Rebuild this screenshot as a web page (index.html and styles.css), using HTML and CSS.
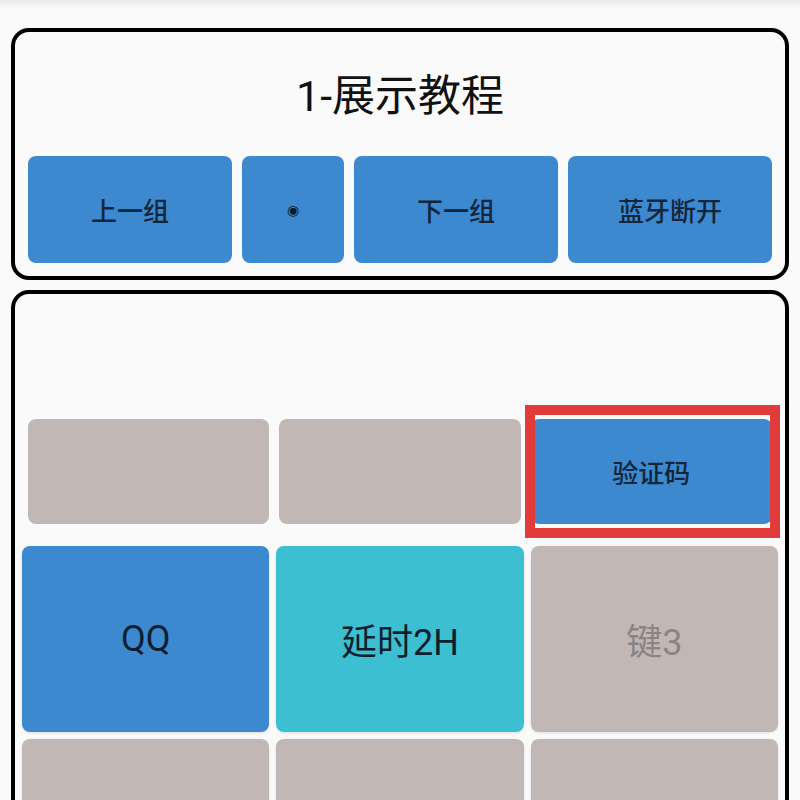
FILE: index.html
```html
<!DOCTYPE html>
<html lang="zh-CN">
<head>
  <meta charset="UTF-8">
  <title>1-展示教程</title>
  <link rel="stylesheet" href="styles.css">
</head>
<body>
  <div class="page">
    <!-- 分组控制 -->
    <div class="card group-card">
      <div class="group-title">1-展示教程</div>
      <div class="nav-row">
        <div class="btn wide">上一组</div>
        <div class="btn narrow"><span class="dot">◉</span></div>
        <div class="btn wide">下一组</div>
        <div class="btn wide">蓝牙断开</div>
      </div>
    </div>

    <!-- 按键面板 -->
    <div class="card key-card">
      <div class="key-spacer"></div>
      <div class="small-row">
        <div class="btn gray"></div>
        <div class="btn gray"></div>
        <div class="btn">验证码</div>
      </div>
      <div class="big-row">
        <div class="key blue">QQ</div>
        <div class="key teal">延时2H</div>
        <div class="key gray off">键3</div>
      </div>
      <div class="big-row">
        <div class="key gray"></div>
        <div class="key gray"></div>
        <div class="key gray"></div>
      </div>
      <div class="mark"></div>
    </div>
  </div>
</body>
</html>
```

FILE: styles.css
```css
html, body {
  margin: 0;
  padding: 0;
  background: #fafafa;
  font-family: Roboto, 'Noto Sans CJK SC', sans-serif;
  overflow: hidden;
}
body {
  height: 800px;
  background: linear-gradient(180deg, #e9e9e9 0, #fafafa 9px);
}
.page {
  padding: 28px 11px 0;
}
.card {
  border: 4px solid #000;
  border-radius: 18px;
  background: #fafafa;
  box-sizing: border-box;
}
.group-card {
  padding: 0 13px 13px;
}
.group-title {
  height: 119px;
  padding-bottom: 5px;
  display: flex;
  align-items: center;
  justify-content: center;
  font-size: 43px;
  color: #111;
}
.nav-row {
  display: flex;
  gap: 10px;
  height: 107px;
}
.btn {
  display: flex;
  align-items: center;
  justify-content: center;
  background: #3c89cf;
  border-radius: 8px;
  font-size: 26px;
  font-weight: 500;
  color: #13253a;
}
.wide { flex: 2; }
.narrow { flex: 1; }
.dot {
  font-family: 'DejaVu Sans', sans-serif;
  font-size: 14px;
  font-weight: 400;
  color: #0d1b2c;
}

.key-card {
  margin-top: 10px;
  padding: 0 7px;
  position: relative;
  height: 600px;
}
.key-spacer {
  height: 125px;
}
.small-row {
  display: grid;
  grid-template-columns: repeat(3, 1fr);
  gap: 10px;
  height: 105px;
  margin: 0 6px 22px;
}
.btn.gray {
  background: #c1b8b6;
}
.big-row {
  display: grid;
  grid-template-columns: repeat(3, 1fr);
  gap: 7px;
  height: 186px;
  margin-bottom: 7px;
}
.key {
  display: flex;
  align-items: center;
  justify-content: center;
  border-radius: 8px;
  font-size: 36px;
  color: #0f1e2e;
  box-shadow: 0 1px 3px rgba(0,0,0,0.12);
}
.key.blue { background: #3c89cf; }
.key.teal { background: #3cbfd1; }
.key.gray { background: #c1b8b6; }
.key.off { color: #8b8483; }

/* 当前选中的按键 */
.mark {
  position: absolute;
  left: 510px;
  top: 111px;
  width: 255px;
  height: 133px;
  border: 10px solid #e13c3c;
  box-sizing: border-box;
}
```
